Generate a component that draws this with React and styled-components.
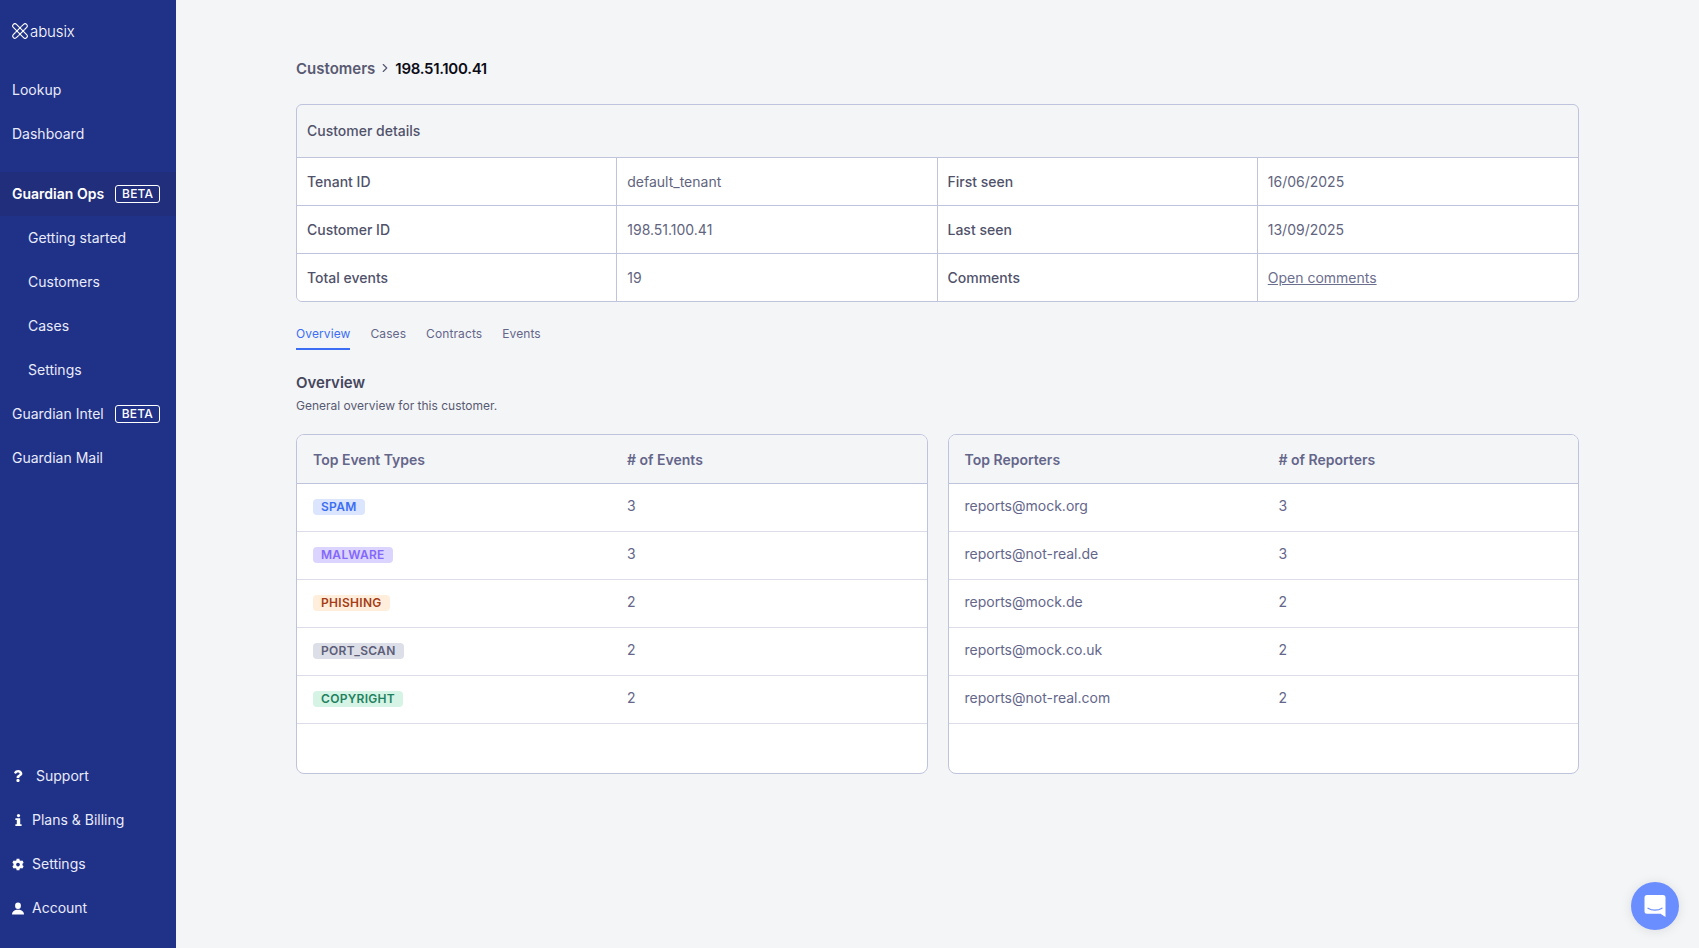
import styled, { createGlobalStyle } from "styled-components";
import { FaQuestion, FaCog } from "react-icons/fa";
import { LuChevronRight } from "react-icons/lu";

const GlobalStyle = createGlobalStyle`
  html, body {
    margin: 0;
    height: 100%;
    background: #f4f5f7;
    font-family: Inter, "Liberation Sans", sans-serif;
  }
  * { box-sizing: border-box; }
`;

const Layout = styled.div`
  display: flex;
  height: 948px;
  overflow: hidden;
`;

const Sidebar = styled.aside`
  width: 176px;
  flex-shrink: 0;
  background: #203188;
  color: #e8ebf8;
  display: flex;
  flex-direction: column;
  padding-bottom: 18px;
`;

const LogoRow = styled.div`
  display: flex;
  align-items: center;
  gap: 2px;
  height: 32px;
  margin: 15px 0 21px;
  padding-left: 12px;
`;

const LogoText = styled.span`
  font-size: 15px;
  font-weight: 300;
  letter-spacing: -0.1px;
  color: #fff;
`;

const NavItem = styled.div`
  display: flex;
  align-items: center;
  height: 44px;
  padding-bottom: 2px;
  font-size: 14px;
  padding-left: ${(props) => (props.$sub ? "28px" : "12px")};
  font-weight: ${(props) => (props.$active ? 600 : 400)};
  color: ${(props) => (props.$active ? "#fff" : "#e8ebf8")};
  background: ${(props) => (props.$active ? "#202e7c" : "transparent")};
`;

const NavGroup = styled.div`
  margin-top: ${(props) => props.$gap || 0}px;
`;

const Beta = styled.span`
  margin: 2px 0 0 11px;
  padding: 0 6px;
  height: 18px;
  line-height: 16px;
  border: 1px solid #fff;
  border-radius: 3px;
  color: #fff;
  font-size: 12px;
  font-weight: 500;
  letter-spacing: 0.2px;
`;

const BottomNav = styled.div`
  margin-top: auto;
`;

const IconSlot = styled.span`
  width: 12px;
  display: flex;
  justify-content: center;
  margin: 2px ${(props) => props.$gap}px 0 0;
  color: #fff;
  font-size: ${(props) => props.$size || 12}px;
`;

const Main = styled.main`
  flex: 1;
  padding: 0 120px;
  min-width: 0;
`;

const Breadcrumb = styled.div`
  display: flex;
  align-items: center;
  height: 24px;
  margin: 56px 0 24px;
  font-size: 15px;
  font-weight: 600;
  color: #585a72;
`;

const Current = styled.span`
  color: #0c0d17;
  font-weight: 600;
  letter-spacing: -0.3px;
`;

const Crumb = styled.span`
  display: flex;
  margin: 0 3px;
  color: #585a72;
  font-size: 14px;
`;

const DetailsCard = styled.section`
  border: 1px solid #bfc3dc;
  border-radius: 6px;
  overflow: hidden;
  font-size: 14px;
`;

const DetailsTitle = styled.div`
  height: 53px;
  padding: 0 10px 2px;
  display: flex;
  align-items: center;
  font-weight: 500;
  color: #50526a;
  border-bottom: 1px solid #bfc3dc;
`;

const DetailsRow = styled.div`
  display: grid;
  grid-template-columns: repeat(4, 1fr);
  height: 48px;
  background: #fff;
  &:not(:last-child) {
    border-bottom: 1px solid #bfc3dc;
  }
  &:last-child {
    height: 47px;
  }
`;

const DetailsCell = styled.div`
  display: flex;
  align-items: center;
  padding: 0 10px;
  font-weight: ${(props) => (props.$label ? 500 : 400)};
  color: ${(props) => (props.$label ? "#50526a" : "#62647e")};
  &:not(:last-child) {
    border-right: 1px solid #bfc3dc;
  }
`;

const CommentsLink = styled.a`
  color: #6c6e8e;
  text-decoration: underline;
`;

const Tabs = styled.nav`
  display: flex;
  gap: 20px;
  margin-top: 21px;
  height: 27px;
  font-size: 12px;
`;

const Tab = styled.span`
  height: 27px;
  padding-top: 3px;
  font-weight: 400;
  letter-spacing: 0.1px;
  color: ${(props) => (props.$active ? "#3b6ef5" : "#64668a")};
  border-bottom: ${(props) => (props.$active ? "2px solid #3b6ef5" : "none")};
`;

const SectionTitle = styled.h2`
  margin: 23px 0 0;
  font-size: 15px;
  line-height: 20px;
  font-weight: 600;
  color: #45475c;
`;

const SectionSub = styled.p`
  margin: 5px 0 0;
  font-size: 12px;
  line-height: 16px;
  color: #585a72;
`;

const CardGrid = styled.div`
  display: grid;
  grid-template-columns: 1fr 1fr;
  gap: 20px;
  margin-top: 20px;
`;

const ListCard = styled.section`
  height: 340px;
  border: 1px solid #bfc3dc;
  border-radius: 8px;
  overflow: hidden;
  background: #fff;
  font-size: 14px;
`;

const ListHeader = styled.div`
  display: grid;
  grid-template-columns: 314px 1fr;
  align-items: center;
  height: 49px;
  padding: 0 16px;
  background: #f4f5f7;
  border-bottom: 1px solid #bfc3dc;
  font-weight: 600;
  color: #64668a;
`;

const ListRow = styled.div`
  display: grid;
  grid-template-columns: 314px 1fr;
  align-items: center;
  height: 48px;
  padding: 0 16px 4px;
  border-bottom: 1px solid #dcdde8;
  color: #64668a;
`;

const Badge = styled.span`
  justify-self: start;
  height: 16px;
  margin-top: 2px;
  line-height: 16px;
  padding: 0 8px;
  border-radius: 4px;
  font-size: 12px;
  font-weight: 600;
  letter-spacing: 0.3px;
  color: ${(props) => props.$fg};
  background: ${(props) => props.$bg};
`;

const ChatButton = styled.button`
  position: fixed;
  left: 1631px;
  top: 882px;
  width: 48px;
  height: 48px;
  padding: 0;
  border: none;
  border-radius: 50%;
  background: #6a8dff;
  display: flex;
  align-items: center;
  justify-content: center;
  box-shadow: 0 1px 12px rgba(0, 0, 0, 0.1);
`;

const badgeColors = {
  SPAM: ["#3b6ef5", "#dbe5fd"],
  MALWARE: ["#8467fb", "#dbd4ff"],
  PHISHING: ["#a63d16", "#ffeedb"],
  PORT_SCAN: ["#5c5e78", "#dcdee8"],
  COPYRIGHT: ["#1f8160", "#d5f4e5"],
};

const eventTypes = [
  ["SPAM", 3],
  ["MALWARE", 3],
  ["PHISHING", 2],
  ["PORT_SCAN", 2],
  ["COPYRIGHT", 2],
];

const reporters = [
  ["reports@mock.org", 3],
  ["reports@not-real.de", 3],
  ["reports@mock.de", 2],
  ["reports@mock.co.uk", 2],
  ["reports@not-real.com", 2],
];

function LogoMark() {
  return (
    <svg width="16" height="16" viewBox="0 0 16 16" fill="none" stroke="#fff" strokeWidth="1.1">
      <rect x="-1.4" y="5.8" width="18.8" height="4.4" rx="2.2" transform="rotate(45 8 8)" />
      <path d="M9.5 3.4 L11.6 1.3 A2.2 2.2 0 0 1 14.7 4.4 L12.6 6.5 M3.4 9.5 L1.3 11.6 A2.2 2.2 0 0 0 4.4 14.7 L6.5 12.6" />
      <path d="M9.5 3.4 L3.4 9.5 M12.6 6.5 L6.5 12.6" />
    </svg>
  );
}

function InfoIcon() {
  return (
    <svg width="7" height="12" viewBox="0 0 7 12" fill="#fff">
      <circle cx="3.5" cy="1.6" r="1.6" />
      <path d="M0.4 4.2H5.2V10.2H6.6V12H0.4V10.2H1.8V6H0.4Z" />
    </svg>
  );
}

function AccountIcon() {
  return (
    <svg width="13" height="13" viewBox="0 0 12 12" fill="#fff">
      <ellipse cx="6" cy="3.2" rx="2.9" ry="3.2" />
      <path d="M0 12C0 9.2 1.6 8.4 4.2 7.2H7.8C10.4 8.4 12 9.2 12 12Z" />
    </svg>
  );
}

function App() {
  return (
    <>
      <GlobalStyle />
      <Layout>
        <Sidebar>
          <LogoRow>
            <LogoMark />
            <LogoText>abusix</LogoText>
          </LogoRow>
          <NavItem>Lookup</NavItem>
          <NavItem>Dashboard</NavItem>
          <NavGroup $gap={16}>
            <NavItem $active>
              Guardian Ops<Beta>BETA</Beta>
            </NavItem>
            <NavItem $sub>Getting started</NavItem>
            <NavItem $sub>Customers</NavItem>
            <NavItem $sub>Cases</NavItem>
            <NavItem $sub>Settings</NavItem>
            <NavItem>
              Guardian Intel<Beta>BETA</Beta>
            </NavItem>
            <NavItem>Guardian Mail</NavItem>
          </NavGroup>
          <BottomNav>
            <NavItem>
              <IconSlot $gap={12}><FaQuestion /></IconSlot>Support
            </NavItem>
            <NavItem>
              <IconSlot $gap={8}><InfoIcon /></IconSlot>Plans &amp; Billing
            </NavItem>
            <NavItem>
              <IconSlot $gap={8} $size={13}><FaCog /></IconSlot>Settings
            </NavItem>
            <NavItem>
              <IconSlot $gap={8}><AccountIcon /></IconSlot>Account
            </NavItem>
          </BottomNav>
        </Sidebar>
        <Main>
          <Breadcrumb>
            Customers
            <Crumb><LuChevronRight /></Crumb>
            <Current>198.51.100.41</Current>
          </Breadcrumb>
          <DetailsCard>
            <DetailsTitle>Customer details</DetailsTitle>
            <DetailsRow>
              <DetailsCell $label>Tenant ID</DetailsCell>
              <DetailsCell>default_tenant</DetailsCell>
              <DetailsCell $label>First seen</DetailsCell>
              <DetailsCell>16/06/2025</DetailsCell>
            </DetailsRow>
            <DetailsRow>
              <DetailsCell $label>Customer ID</DetailsCell>
              <DetailsCell>198.51.100.41</DetailsCell>
              <DetailsCell $label>Last seen</DetailsCell>
              <DetailsCell>13/09/2025</DetailsCell>
            </DetailsRow>
            <DetailsRow>
              <DetailsCell $label>Total events</DetailsCell>
              <DetailsCell>19</DetailsCell>
              <DetailsCell $label>Comments</DetailsCell>
              <DetailsCell>
                <CommentsLink>Open comments</CommentsLink>
              </DetailsCell>
            </DetailsRow>
          </DetailsCard>
          <Tabs>
            <Tab $active>Overview</Tab>
            <Tab>Cases</Tab>
            <Tab>Contracts</Tab>
            <Tab>Events</Tab>
          </Tabs>
          <SectionTitle>Overview</SectionTitle>
          <SectionSub>General overview for this customer.</SectionSub>
          <CardGrid>
            <ListCard>
              <ListHeader>
                <span>Top Event Types</span>
                <span># of Events</span>
              </ListHeader>
              {eventTypes.map(([name, count]) => (
                <ListRow key={name}>
                  <Badge $fg={badgeColors[name][0]} $bg={badgeColors[name][1]}>
                    {name}
                  </Badge>
                  <span>{count}</span>
                </ListRow>
              ))}
            </ListCard>
            <ListCard>
              <ListHeader>
                <span>Top Reporters</span>
                <span># of Reporters</span>
              </ListHeader>
              {reporters.map(([email, count]) => (
                <ListRow key={email}>
                  <span>{email}</span>
                  <span>{count}</span>
                </ListRow>
              ))}
            </ListCard>
          </CardGrid>
        </Main>
      </Layout>
      <ChatButton aria-label="Open chat">
        <svg width="22" height="24" viewBox="0 0 22 24">
          <path d="M3 1h16a2.5 2.5 0 0 1 2.5 2.5V23l-5-3.2H3A2.5 2.5 0 0 1 .5 17.3V3.5A2.5 2.5 0 0 1 3 1Z" fill="#fff" />
          <path d="M4 14.2c4 2.6 10 2.6 14 0" fill="none" stroke="#6a8dff" strokeWidth="1.2" strokeLinecap="round" />
        </svg>
      </ChatButton>
    </>
  );
}

export default App;
